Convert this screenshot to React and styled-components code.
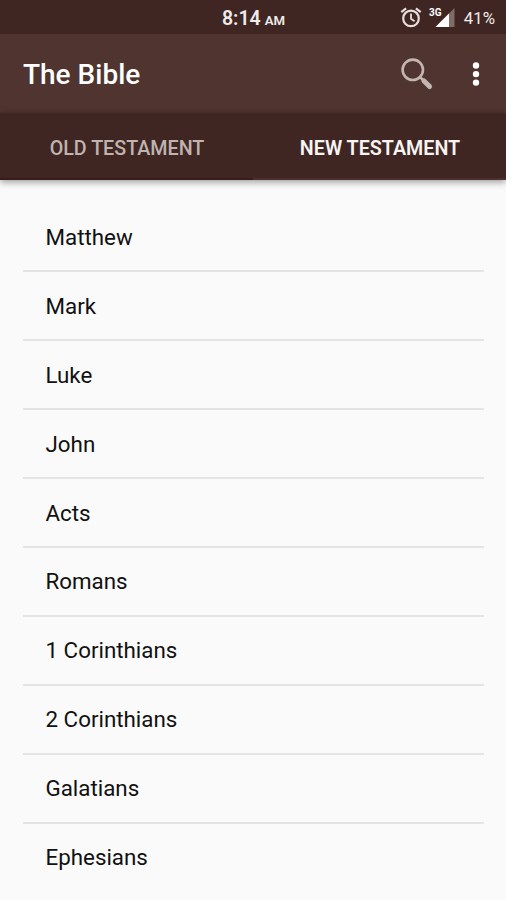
import styled, { createGlobalStyle } from 'styled-components'

const GlobalStyle = createGlobalStyle`
  * {
    box-sizing: border-box;
  }
  body {
    margin: 0;
    background-color: #fafafa;
    font-family: Roboto, 'Liberation Sans', sans-serif;
    overflow: hidden;
  }
`
const Screen = styled.div`
  display: flex;
  flex-direction: column;
  width: 506px;
  height: 900px;
  overflow: hidden;
  background-color: #fafafa;
`
const StatusBar = styled.div`
  display: grid;
  grid-template-columns: 1fr auto 1fr;
  align-items: center;
  flex: none;
  height: 34px;
  padding: 2px 11px 0 12px;
  background-color: #3f2622;
  color: #efebe9;
`
const Clock = styled.div`
  grid-column: 2;
  padding-top: 3px;
  font-size: 19.5px;
  line-height: 24px;
  font-weight: 600;
  white-space: nowrap;
`
const Meridiem = styled.span`
  margin-left: 4px;
  font-size: 13.2px;
`
const StatusIcons = styled.div`
  display: flex;
  align-items: center;
  justify-content: flex-end;
`
const Battery = styled.span`
  margin-left: 9px;
  font-size: 16.8px;
  line-height: 24px;
`
const Toolbar = styled.header`
  display: flex;
  align-items: center;
  flex: none;
  height: 79px;
  padding: 0 26px 0 23px;
  background-color: #4f342f;
`
const Title = styled.h1`
  flex: 1;
  margin: 0;
  padding-top: 2px;
  font-size: 28px;
  line-height: 32px;
  font-weight: 500;
  color: #fff;
`
const Actions = styled.div`
  display: flex;
  align-items: center;
  gap: 38px;
`
const Tabs = styled.nav`
  display: flex;
  flex: none;
  height: 67px;
  background-color: #3f2622;
  box-shadow: 0 2px 7px rgba(0, 0, 0, 0.4);
`
const Tab = styled.div`
  flex: 1;
  display: flex;
  align-items: center;
  justify-content: center;
  padding-top: 6px;
  padding-left: 1px;
  border-bottom: 2px solid ${(props) => (props.$active ? '#4b302b' : '#3a1d19')};
  font-size: 19.7px;
  font-weight: ${(props) => (props.$active ? 600 : 500)};
  color: ${(props) => (props.$active ? '#f7f4f3' : '#bfb4b0')};
`
const Books = styled.ul`
  margin: 0;
  padding: 23.5px 22px 0 23px;
  list-style: none;
`
const Book = styled.li`
  display: flex;
  align-items: center;
  height: 68.9px;
  padding: 0 22.5px;
  border-bottom: 2px solid #e4e4e4;
  font-size: 22.35px;
  color: #111;

  &:last-child {
    border-bottom-color: transparent;
  }
`

const books = [
  'Matthew',
  'Mark',
  'Luke',
  'John',
  'Acts',
  'Romans',
  '1 Corinthians',
  '2 Corinthians',
  'Galatians',
  'Ephesians',
]

const AlarmIcon = () => (
  <svg width='22' height='22' viewBox='0 0 22 22' fill='none' stroke='#e6dfdc'>
    <circle cx='11' cy='11.4' r='7.8' strokeWidth='2.2' />
    <path d='M11 6.6v5.2l3.6 2.4' strokeWidth='1.8' />
    <path d='M1.3 5.2l4.8-3.8M20.7 5.2l-4.8-3.8' strokeWidth='2.2' />
  </svg>
)

const SignalIcon = () => (
  <svg width='33' height='22' viewBox='0 0 33 22'>
    <path d='M32.5 1v19h-19z' fill='#806b67' />
    <path d='M27 6.5v13.5H13.5z' fill='#fff' />
    <text
      x='7'
      y='9'
      fontSize='10'
      fontWeight='700'
      fill='#fff'
      stroke='#3f2622'
      strokeWidth='2'
      paintOrder='stroke'
    >
      3G
    </text>
  </svg>
)

const SearchIcon = () => (
  <svg width='34' height='34' viewBox='0 0 34 34' fill='none' stroke='#c4b5b0'>
    <circle cx='12.8' cy='12.8' r='10.2' strokeWidth='2.6' />
    <path d='M20 20l4 4' strokeWidth='2.6' />
    <path d='M24 24l5.6 5.6' strokeWidth='5' strokeLinecap='round' />
  </svg>
)

const MoreIcon = () => (
  <svg width='8' height='26' viewBox='0 0 8 26' fill='#fff'>
    <circle cx='4' cy='4.5' r='3.2' />
    <circle cx='4' cy='13.1' r='3.2' />
    <circle cx='4' cy='21.6' r='3.2' />
  </svg>
)

const App = () => {
  return (
    <Screen>
      <GlobalStyle />
      <StatusBar>
        <Clock>
          8:14<Meridiem>AM</Meridiem>
        </Clock>
        <StatusIcons>
          <AlarmIcon />
          <SignalIcon />
          <Battery>41%</Battery>
        </StatusIcons>
      </StatusBar>
      <Toolbar>
        <Title>The Bible</Title>
        <Actions>
          <SearchIcon />
          <MoreIcon />
        </Actions>
      </Toolbar>
      <Tabs>
        <Tab>OLD TESTAMENT</Tab>
        <Tab $active>NEW TESTAMENT</Tab>
      </Tabs>
      <Books>
        {books.map((book) => (
          <Book key={book}>{book}</Book>
        ))}
      </Books>
    </Screen>
  )
}

export default App
